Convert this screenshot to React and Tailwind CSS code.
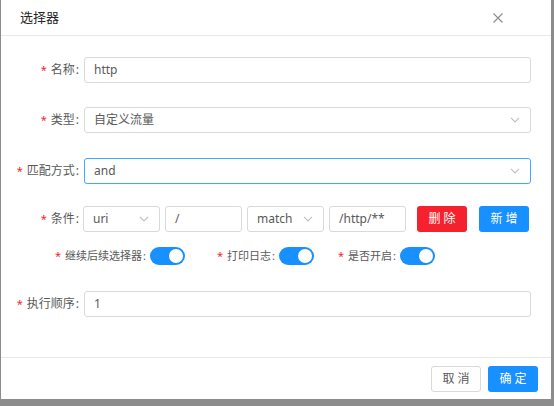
const font = { fontFamily: '"Noto Sans", "Noto Sans CJK SC", sans-serif' }

function Chevron() {
  return (
    <svg width="10" height="6" viewBox="0 0 10 6" fill="none" stroke="#bfbfbf" strokeWidth="1.1">
      <path d="M1 0.8 L5 5 L9 0.8" />
    </svg>
  )
}

function Label({ children, className = '' }) {
  return (
    <div className={`flex items-center justify-end text-[#595959] whitespace-nowrap ${className}`}>
      <span className="text-[#f5222d] mr-[4px] text-[11px]">*</span>
      <span>{children}</span>
      <span className="ml-[1px]">:</span>
    </div>
  )
}

function Input({ value, className = '' }) {
  return (
    <div className={`h-[26px] border border-[#d9d9d9] rounded-[3px] px-[9px] flex items-center text-[12px] text-[#595959] ${className}`}>
      {value}
    </div>
  )
}

function Select({ value, className = '', active = false }) {
  return (
    <div className={`h-[26px] border rounded-[3px] pl-[9px] pr-[10px] flex items-center justify-between text-[12px] text-[#595959] ${active ? 'border-[#40a9ff]' : 'border-[#d9d9d9]'} ${className}`}>
      <span>{value}</span>
      <Chevron />
    </div>
  )
}

function Toggle() {
  return (
    <div className="w-[35px] h-[18px] rounded-full bg-[#1890ff] flex items-center justify-end pr-[2px]">
      <div className="w-[14px] h-[14px] rounded-full bg-white" />
    </div>
  )
}

export default function App() {
  return (
    <div className="w-[554px] h-[406px] bg-[#8c8c8c] pl-[1px] overflow-hidden" style={font}>
      <div className="w-[550px] h-[399px] bg-white flex flex-col">
        <div className="h-[36px] border-b border-[#e8e8e8] flex items-center justify-between pl-[19px] pr-[48px] shrink-0">
          <span className="text-[13px] text-[#262626]">选择器</span>
          <svg width="10" height="10" viewBox="0 0 10 10" stroke="#8c8c8c" strokeWidth="1.1">
            <path d="M0.5 0.5 L9.5 9.5 M9.5 0.5 L0.5 9.5" />
          </svg>
        </div>

        <div className="flex-1 flex flex-col text-[12px]">
          <div className="flex items-center mt-[21px]">
            <Label className="w-[78px]">名称</Label>
            <Input value="http" className="ml-[5px] w-[447px]" />
          </div>

          <div className="flex items-center mt-[24px]">
            <Label className="w-[78px]">类型</Label>
            <Select value="自定义流量" className="ml-[5px] w-[447px]" />
          </div>

          <div className="flex items-center mt-[25px]">
            <Label className="w-[78px]">匹配方式</Label>
            <Select value="and" active className="ml-[5px] w-[447px]" />
          </div>

          <div className="flex items-center mt-[22px]">
            <Label className="w-[78px]">条件</Label>
            <div className="ml-[4px] flex items-center gap-[5px]">
              <Select value="uri" className="w-[77px]" />
              <Input value="/" className="w-[77px]" />
              <Select value="match" className="w-[77px]" />
              <Input value="/http/**" className="w-[77px]" />
            </div>
            <button className="ml-[11px] w-[50px] h-[26px] rounded-[3px] bg-[#f5222d] text-white text-[12px] tracking-[3px] pl-[3px]">删除</button>
            <button className="ml-[12px] w-[50px] h-[26px] rounded-[3px] bg-[#1890ff] text-white text-[12px] tracking-[3px] pl-[3px]">新增</button>
          </div>

          <div className="flex items-center mt-[15px] pl-[52px] text-[11px]">
            <Label className="w-[93px]">继续后续选择器</Label>
            <div className="ml-[4px]"><Toggle /></div>
            <Label className="ml-[27px] w-[63px]">打印日志</Label>
            <div className="ml-[4px]"><Toggle /></div>
            <Label className="ml-[19px] w-[63px]">是否开启</Label>
            <div className="ml-[4px]"><Toggle /></div>
          </div>

          <div className="flex items-center mt-[26px]">
            <Label className="w-[78px]">执行顺序</Label>
            <Input value="1" className="ml-[5px] w-[447px]" />
          </div>
        </div>

        <div className="h-[42px] border-t border-[#e8e8e8] flex items-center justify-end gap-[7px] pr-[13px] shrink-0">
          <button className="w-[50px] h-[26px] rounded-[3px] border border-[#d9d9d9] text-[#595959] text-[12px] tracking-[3px] pl-[3px]">取消</button>
          <button className="w-[50px] h-[26px] rounded-[3px] bg-[#1890ff] text-white text-[12px] tracking-[3px] pl-[3px]">确定</button>
        </div>
      </div>
    </div>
  )
}
